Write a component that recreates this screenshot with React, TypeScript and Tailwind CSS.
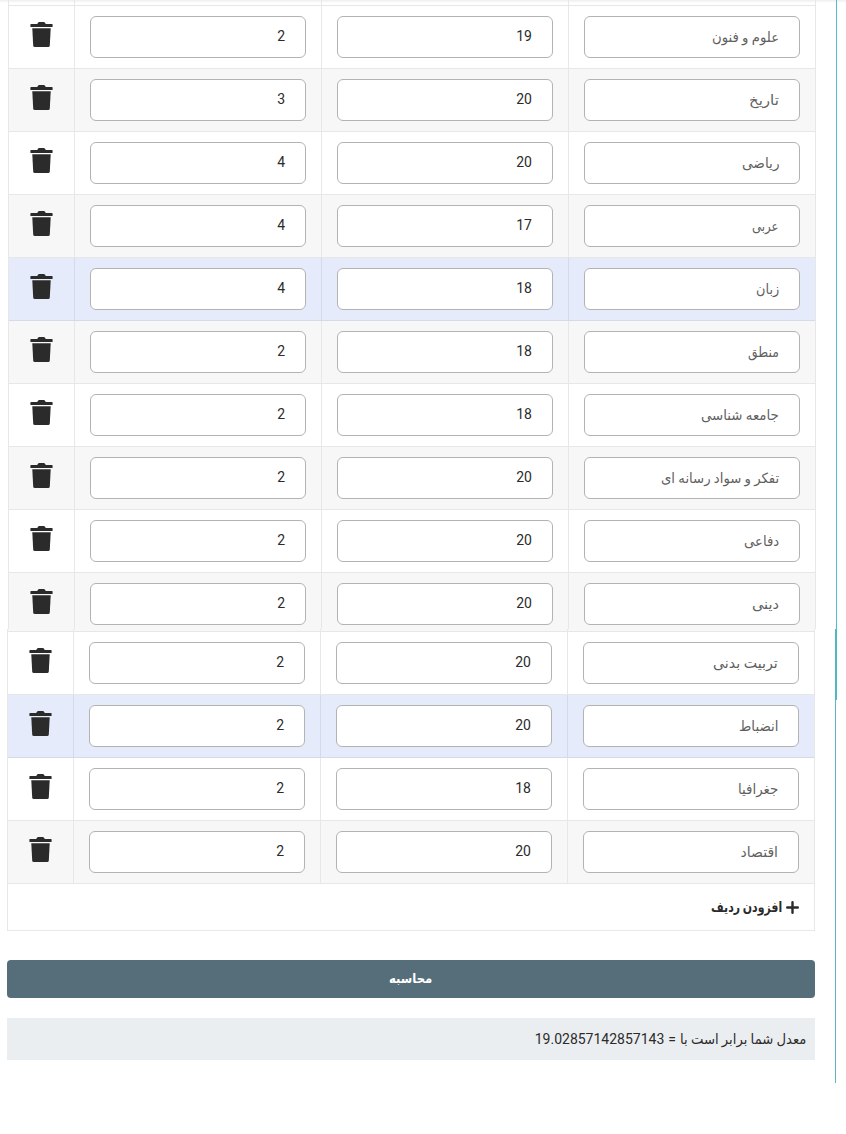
import React from "react";

type Row = { name: string; grade: string; unit: string; w: number; active?: boolean };

const firstRows: Row[] = [
  { name: "علوم و فنون", grade: "19", unit: "2", w: 67 },
  { name: "تاریخ", grade: "20", unit: "3", w: 30 },
  { name: "ریاضی", grade: "20", unit: "4", w: 37 },
  { name: "عربی", grade: "17", unit: "4", w: 27 },
  { name: "زبان", grade: "18", unit: "4", w: 23, active: true },
  { name: "منطق", grade: "18", unit: "2", w: 31 },
  { name: "جامعه شناسی", grade: "18", unit: "2", w: 78 },
  { name: "تفکر و سواد رسانه ای", grade: "20", unit: "2", w: 118 },
  { name: "دفاعی", grade: "20", unit: "2", w: 35 },
  { name: "دینی", grade: "20", unit: "2", w: 27 },
];

const lastRows: Row[] = [
  { name: "تربیت بدنی", grade: "20", unit: "2", w: 65 },
  { name: "انضباط", grade: "20", unit: "2", w: 39, active: true },
  { name: "جغرافیا", grade: "18", unit: "2", w: 40 },
  { name: "اقتصاد", grade: "20", unit: "2", w: 37 },
];

/** Persian text scaled horizontally so that it takes exactly the given width. */
function Fit({ text, w }: { text: string; w: number }) {
  const ref = React.useRef<HTMLSpanElement>(null);
  const [scale, setScale] = React.useState(1);
  React.useLayoutEffect(() => {
    if (ref.current) setScale(w / ref.current.offsetWidth);
  }, [w]);
  return (
    <span dir="rtl" className="flex shrink-0 justify-start" style={{ width: w }}>
      <span
        ref={ref}
        className="inline-block shrink-0 origin-right whitespace-nowrap"
        style={{ transform: `scaleX(${scale})` }}
      >
        {text}
      </span>
    </span>
  );
}

function Trash() {
  return (
    <svg width="23" height="25" viewBox="0 0 23 25" fill="#2b2b2b" className="mb-[5px]">
      <path d="M1 2H7.2L8 0.7Q8.4 0 9.1 0H13.9Q14.6 0 15 0.7L15.8 2H22Q22.6 2 22.6 2.6V4.4Q22.6 5 22 5H1Q0.4 5 0.4 4.4V2.6Q0.4 2 1 2Z" />
      <path d="M2.3 6.3H20.7L19.8 23.4Q19.7 25 18.2 25H4.8Q3.3 25 3.2 23.4Z" />
    </svg>
  );
}

function Box({ children, muted }: { children: React.ReactNode; muted?: boolean }) {
  return (
    <div
      dir="rtl"
      className={`flex h-[42px] w-[216px] items-center rounded-[6px] border border-[#b3b3b3] bg-white pr-[20px] text-[14px] leading-[20px] ${muted ? "text-[#5f5f5f]" : "pb-[2px] text-[#2b2b2b]"}`}
    >
      {children}
    </div>
  );
}

function GridRow({ row, striped }: { row: Row; striped: boolean }) {
  const bg = row.active ? "bg-[#e6ebfb]" : striped ? "bg-[#f7f7f7]" : "bg-white";
  const line = row.active ? "border-[#d5daea]" : "border-[#e7e7e7]";
  return (
    <div className={`flex h-[63px] border-b ${bg} ${line}`}>
      <div className={`flex w-[66px] items-center justify-center border-r ${line}`}>
        <Trash />
      </div>
      <div className={`flex w-[247px] items-center border-r pl-[15px] ${line}`}>
        <Box>{row.unit}</Box>
      </div>
      <div className={`flex w-[247px] items-center border-r pl-[15px] ${line}`}>
        <Box>{row.grade}</Box>
      </div>
      <div className="flex w-[246px] items-center pl-[15px]">
        <Box muted>
          <Fit text={row.name} w={row.w} />
        </Box>
      </div>
    </div>
  );
}

function Strip({ className }: { className: string }) {
  return (
    <div className={`flex border-b border-[#e7e7e7] ${className}`}>
      <div className="w-[66px] border-r border-[#e7e7e7]" />
      <div className="w-[247px] border-r border-[#e7e7e7]" />
      <div className="w-[247px] border-r border-[#e7e7e7]" />
    </div>
  );
}

export default function App() {
  return (
    <div className="h-[1134px] w-[846px] overflow-hidden bg-white bg-linear-to-b from-[#eeeeee] to-white to-[3px] font-[Roboto,'DejaVu_Sans',sans-serif] text-[#2b2b2b]">
      <div className="flex h-[629px] w-[837px] justify-between overflow-hidden border-r border-[#4fbfc6] pl-[8px]">
        <div className="h-[636px] w-[808px] border-x border-[#e7e7e7]">
          <Strip className="h-[6px]" />
          {firstRows.map((row, i) => (
            <GridRow key={row.name} row={row} striped={i % 2 === 1} />
          ))}
        </div>
      </div>

      <div className="flex h-[454px] justify-between pl-[7px] pr-[9px]">
        <div className="w-[808px]">
          <div className="border-x border-b border-[#e7e7e7]">
            <Strip className="h-[3px] bg-[#f7f7f7]" />
            {lastRows.map((row, i) => (
              <GridRow key={row.name} row={row} striped={i % 2 === 1} />
            ))}
            <div dir="rtl" className="flex h-[46px] items-center gap-[4px] pr-[15px] text-[14px] font-bold">
              <svg width="13" height="13" viewBox="0 0 13 13" fill="none" stroke="#2b2b2b" strokeWidth="2.4" strokeLinecap="round">
                <path d="M6.5 1.2V11.8M1.2 6.5H11.8" />
              </svg>
              <Fit text="افزودن ردیف" w={71} />
            </div>
          </div>
          <button className="mt-[29px] flex h-[38px] w-full items-center justify-center rounded-[4px] bg-[#566e79] text-[13px] font-bold text-white">
            <Fit text="محاسبه" w={43} />
          </button>
          <div dir="rtl" className="mt-[20px] flex h-[42px] items-center bg-[#ebeef1] pr-[9px] text-[14px]">
            <Fit text="معدل شما برابر است با" w={126} />
            <span className="mr-[4px]">=</span>
            <span className="mr-[4px]">19.02857142857143</span>
          </div>
        </div>
        <div className="flex w-[2px] flex-col">
          <div className="h-[71px] w-[2px] bg-[#4fb8c4]" />
          <div className="w-px flex-1 bg-[#5cb8bf]" />
        </div>
      </div>
    </div>
  );
}
